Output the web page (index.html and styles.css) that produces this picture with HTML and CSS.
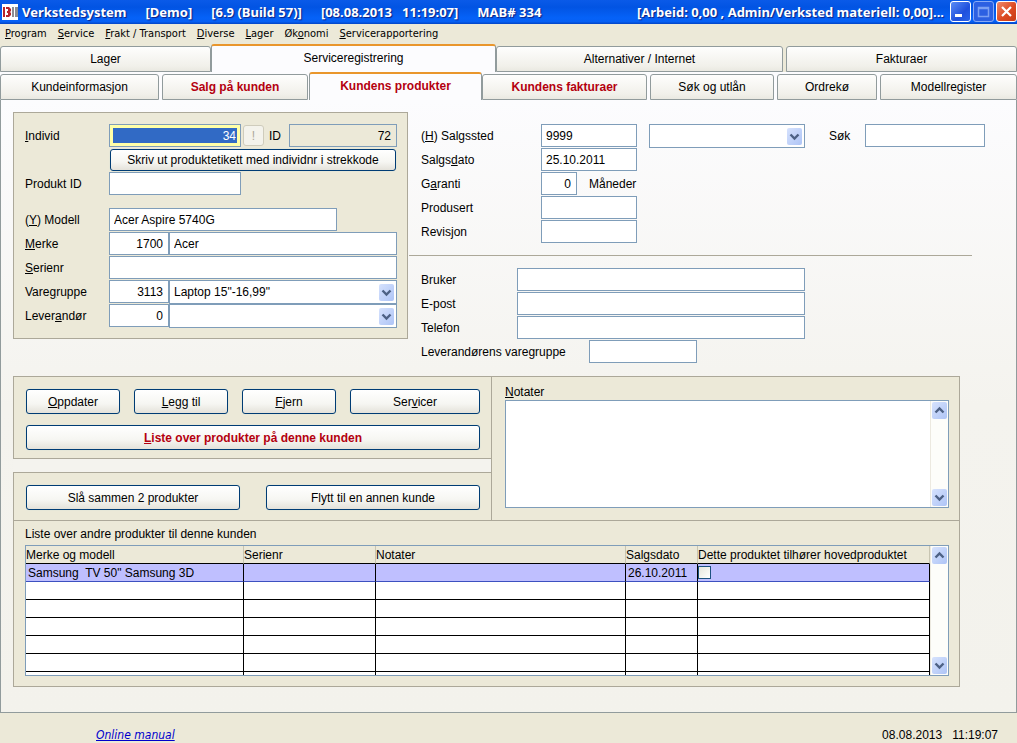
FILE: index.html
```html
<!DOCTYPE html>
<html lang="no">
<head>
<meta charset="utf-8">
<title>Verkstedsystem</title>
<link rel="stylesheet" href="styles.css">
</head>
<body>
<svg class="defs" width="0" height="0" aria-hidden="true">
  <symbol id="down" viewBox="0 0 15 17"><rect x="0" y="0" width="15" height="17" rx="2" fill="url(#blue)"/><path d="M3.5 6.5 7.5 10.5 11.5 6.5" fill="none" stroke="#4d6185" stroke-width="2.4"/></symbol>
  <symbol id="up" viewBox="0 0 15 17"><rect x="0" y="0" width="15" height="17" rx="2" fill="url(#blue)"/><path d="M3.5 10.5 7.5 6.5 11.5 10.5" fill="none" stroke="#4d6185" stroke-width="2.4"/></symbol>
  <linearGradient id="blue" x1="0" y1="0" x2="1" y2="1"><stop offset="0" stop-color="#d6e2fd"/><stop offset="1" stop-color="#aec4f6"/></linearGradient>
</svg>
<div class="window">
  <header class="titlebar">
    <svg class="logo" viewBox="0 0 16 16" width="16" height="16" aria-hidden="true">
      <rect width="16" height="16" fill="#fff"/>
      <path d="M1 3h2v10H1zM4 3h3l2 2v2L8 8l1 1v2l-2 2H4v-2h2v-2H5V7h1V5H4z" fill="#b8232b"/>
      <path d="M10 3h2v10h-2zM13 3h3v10h-3z" fill="#8d8d92"/>
    </svg>
    <div class="captions">
      <span>Verkstedsystem</span><span>[Demo]</span><span>[6.9 (Build 57)]</span><span>[08.08.2013&nbsp;&nbsp; 11:19:07]</span><span>MAB# 334</span>
      <span class="totals">[Arbeid: 0,00 , Admin/Verksted materiell: 0,00]...</span>
    </div>
    <div class="controls">
      <button class="ctl" aria-label="Minimer"><svg viewBox="0 0 19 19" width="19" height="19"><path d="M4 12h7v3H4z" fill="#fff"/></svg></button>
      <button class="ctl dim" aria-label="Maksimer" disabled><svg viewBox="0 0 19 19" width="19" height="19"><path d="M4.500 5.500h10v9h-10zM4 6.500h11" fill="none" stroke="#7ba0f3" stroke-width="1.500"/></svg></button>
      <button class="ctl close" aria-label="Lukk"><svg viewBox="0 0 19 19" width="19" height="19"><path d="M5 5l9 9M14 5l-9 9" stroke="#fff" stroke-width="2.200"/></svg></button>
    </div>
  </header>
  <nav class="menubar">
    <button><u>P</u>rogram</button><button><u>S</u>ervice</button><button><u>F</u>rakt / Transport</button><button><u>D</u>iverse</button><button><u>L</u>ager</button><button>Øk<u>o</u>nomi</button><button><u>S</u>ervicerapportering</button>
  </nav>
  <nav class="tabs main-tabs">
    <button class="tab">Lager</button><button class="tab active">Serviceregistrering</button><button class="tab">Alternativer / Internet</button><button class="tab">Fakturaer</button>
  </nav>
  <nav class="tabs sub-tabs">
    <button class="tab">Kundeinformasjon</button><button class="tab red">Salg på kunden</button><button class="tab red active">Kundens produkter</button><button class="tab red">Kundens fakturaer</button><button class="tab">Søk og utlån</button><button class="tab">Ordrekø</button><button class="tab">Modellregister</button>
  </nav>
  <main class="page">
    <div class="forms">
      <section class="box product">
        <div class="row">
          <label for="individ"><u>I</u>ndivid</label>
          <span class="focus w132"><input id="individ" class="num" value="34"></span>
          <button class="bang" disabled>!</button>
          <label class="id" for="pid">ID</label>
          <input id="pid" class="field num grow readonly" value="72" readonly>
        </div>
        <div class="row">
          <span class="label"></span>
          <button class="btn grow">Skriv ut produktetikett med individnr i strekkode</button>
        </div>
        <div class="row spaced"><label for="prod">Produkt ID</label><input id="prod" class="field w132"></div>
        <div class="row"><label for="modell">(<u>Y</u>) Modell</label><input id="modell" class="field w228" value="Acer Aspire 5740G"></div>
        <div class="row"><label for="merke"><u>M</u>erke</label><input id="merke" class="field num w60" value="1700"><input class="field grow" aria-label="Merkenavn" value="Acer"></div>
        <div class="row"><label for="serie"><u>S</u>erienr</label><input id="serie" class="field grow"></div>
        <div class="row"><label for="vare">Vare<u>g</u>ruppe</label><input id="vare" class="field num w60" value="3113"><span class="combo grow"><select aria-label="Varegruppe navn"><option>Laptop 15"-16,99"</option></select><svg><use href="#down"/></svg></span></div>
        <div class="row"><label for="lev">Lever<u>a</u>ndør</label><input id="lev" class="field num w60" value="0"><span class="combo grow"><select aria-label="Leverandør navn"><option></option></select><svg><use href="#down"/></svg></span></div>
      </section>
      <section class="details">
        <div class="sale">
          <div class="row">
            <label for="sted">(<u>H</u>) Salgssted</label><input id="sted" class="field w96" value="9999">
            <span class="combo place"><select aria-label="Salgssted navn"><option></option></select><svg><use href="#down"/></svg></span>
            <label class="find" for="sok">Søk</label><input id="sok" class="field w120">
          </div>
          <div class="row"><label for="dato">Salgs<u>d</u>ato</label><input id="dato" class="field w96" value="25.10.2011"></div>
          <div class="row"><label for="garanti">G<u>a</u>ranti</label><input id="garanti" class="field num w36" value="0"><span class="unit">Måneder</span></div>
          <div class="row"><label for="produsert">Produsert</label><input id="produsert" class="field w96"></div>
          <div class="row"><label for="revisjon">Revisjon</label><input id="revisjon" class="field w96"></div>
        </div>
        <hr>
        <div class="user">
          <div class="row"><label for="bruker">Bruker</label><input id="bruker" class="field w288"></div>
          <div class="row"><label for="epost">E-post</label><input id="epost" class="field w288"></div>
          <div class="row"><label for="tlf">Telefon</label><input id="tlf" class="field w288"></div>
          <div class="row"><label class="long" for="levgr">Leverandørens varegruppe</label><input id="levgr" class="field w108"></div>
        </div>
      </section>
    </div>
    <div class="lower">
      <div class="actions">
        <div class="group">
          <div class="buttons"><button class="btn w94"><u>O</u>ppdater</button><button class="btn w94"><u>L</u>egg til</button><button class="btn w94"><u>F</u>jern</button><button class="btn grow">Ser<u>v</u>icer</button></div>
          <div class="buttons"><button class="btn grow red"><u>L</u>iste over produkter på denne kunden</button></div>
        </div>
        <div class="gap"></div>
        <div class="group"><div class="buttons wide"><button class="btn grow">Slå sammen 2 produkter</button><button class="btn grow">Flytt til en annen kunde</button></div></div>
      </div>
      <div class="notes">
        <label for="notater"><u>N</u>otater</label>
        <div class="frame memo"><textarea id="notater"></textarea><div class="scroll"><svg><use href="#up"/></svg><svg><use href="#down"/></svg></div></div>
      </div>
      <div class="others">
        <div class="heading">Liste over andre produkter til denne kunden</div>
        <div class="frame">
          <table>
            <colgroup><col class="c1"><col class="c2"><col class="c3"><col class="c4"><col class="c5"></colgroup>
            <thead><tr><th>Merke og modell</th><th>Serienr</th><th>Notater</th><th>Salgsdato</th><th>Dette produktet tilhører hovedproduktet</th></tr></thead>
            <tbody>
              <tr class="selected"><td>Samsung&nbsp; TV 50" Samsung 3D</td><td></td><td></td><td>26.10.2011</td><td class="check"><input type="checkbox" aria-label="Tilhører hovedproduktet"></td></tr>
              <tr><td></td><td></td><td></td><td></td><td></td></tr>
              <tr><td></td><td></td><td></td><td></td><td></td></tr>
              <tr><td></td><td></td><td></td><td></td><td></td></tr>
              <tr><td></td><td></td><td></td><td></td><td></td></tr>
              <tr><td></td><td></td><td></td><td></td><td></td></tr>
              <tr class="cut"><td></td><td></td><td></td><td></td><td></td></tr>
            </tbody>
          </table>
          <div class="scroll"><svg><use href="#up"/></svg><svg><use href="#down"/></svg></div>
        </div>
      </div>
    </div>
  </main>
  <footer class="status"><a href="#">Online manual</a><span>08.08.2013&nbsp;&nbsp; 11:19:07</span></footer>
</div>
</body>
</html>
```
FILE: styles.css
```css
* { box-sizing: border-box; }
body { margin: 0; background: #ece9d8; color: #000; font: 12px/16px "Liberation Sans", Arial, sans-serif; }
button, input, select, textarea { font: inherit; color: inherit; margin: 0; }
button { padding: 0; border: 0; background: none; white-space: nowrap; }
svg { display: block; }
.defs { position: absolute; }
.window { display: flex; flex-direction: column; min-height: 100vh; }

.titlebar { display: flex; align-items: center; height: 24px; padding: 0 0 1px 2px; gap: 4px; background: linear-gradient(#0a5ae8, #0254e3 30%, #0562f8 75%, #0660f4 90%, #0344c4); color: #fff; font: bold 13px/20px "Noto Sans", sans-serif; text-shadow: 1px 1px 1px #0f1f80; }
.captions { display: flex; flex: 1; gap: 19px; white-space: nowrap; }
.totals { margin-left: auto; }
.controls { display: flex; gap: 2px; padding-left: 2px; }
.ctl { width: 21px; height: 21px; border: 1px solid #fff; border-radius: 3px; background: linear-gradient(135deg, #5a8cf5, #1f50dd 60%, #2a64ea); }
.ctl.dim { border-color: #86a9f5; background: #2c60e2; }
.ctl.close { background: linear-gradient(135deg, #ee8a6c, #dd4a22 55%, #c83c16); }

.menubar { display: flex; gap: 11px; height: 20px; padding: 0 5px; font: 11px/18px "DejaVu Sans Condensed", sans-serif; }

.tabs { display: grid; align-items: end; height: 28px; background: #ece9d8; }
.main-tabs { grid-template-columns: 211fr 285fr 290fr 231fr; }
.sub-tabs { grid-template-columns: 162fr 147fr 173fr 168fr 127fr 103fr 137fr; background: #fcfcfe; }
.tab { height: 26px; margin-right: 3px; border: 1px solid #919b9c; border-radius: 3px 3px 0 0; background: linear-gradient(#fefefd, #f1f0ea 80%, #eae9e1); }
.main-tabs .tab:first-child, .tab:last-child { margin-right: 0; }
.sub-tabs .tab:nth-child(2) { margin-right: 1px; }
.tab.active { height: 28px; margin-right: 0; padding-bottom: 2px; border-top: 2px solid #e9962c; border-bottom: 0; background: #fcfcfe; }
.red { color: #b4000f; font-weight: bold; }

.page { flex: 1; padding: 12px; border: solid #919b9c; border-width: 0 1px 1px; background: linear-gradient(#fcfcfe, #f4f3ee 50%, #f3f2ec); }
.forms { display: flex; align-items: flex-start; gap: 1px; margin-bottom: 12px; }
.box { border: 1px solid #aca899; background: #ece9d8; }
.product { width: 395px; padding: 11px 10px 10px 11px; }
.row { display: flex; height: 24px; align-items: flex-start; }
.row.spaced { height: 36px; }
.row label, .row .label { width: 84px; line-height: 24px; }
.field, .combo, .focus { height: 23px; border: 1px solid #7f9db9; background: #fff; border-radius: 0; outline: 0; }
.field { padding: 0 4px; }
.num { text-align: right; padding-right: 5px; }
.grow { flex: 1; min-width: 0; }
.w36 { width: 36px; } .w60 { width: 60px; } .w94 { width: 94px; } .w96 { width: 96px; } .w108 { width: 108px; }
.w120 { width: 120px; } .w132 { width: 132px; } .w228 { width: 228px; } .w288 { width: 288px; }
.focus { padding: 3px; background: #ffffa8; }
.focus input { display: block; width: 100%; height: 15px; padding: 0 1px 0 0; border: 0; background: #316ac5; color: #fff; outline: 0; }
.readonly { background: #ece9d8; }
.bang { width: 21px; height: 21px; margin: 1px 5px 0 2px; border: 1px solid #cfccbc; border-radius: 3px; background: #f4f3ec; color: #aca899; }
.row .id { width: 20px; }
.combo { position: relative; height: 24px; }
.combo select { width: 100%; height: 100%; padding: 0 4px; border: 0; background: none; appearance: none; outline: 0; }
.combo svg { position: absolute; top: 3px; right: 2px; width: 15px; height: 17px; pointer-events: none; }

.btn { height: 25px; border: 1px solid #003c74; border-radius: 3px; background: linear-gradient(#fff, #f6f6f2 60%, #e4e2da); box-shadow: 0 0 1px #b9d3e0; }
.product .btn { height: 22px; margin: 1px 1px 0; }

.details { flex: 1; }
.details .row { padding-left: 12px; }
.sale { padding: 12px 0 11px; }
.sale .row label { width: 120px; }
.user { padding-top: 12px; }
.user .row label { width: 96px; }
.user .row .long { width: 168px; }
.place { width: 156px; margin-left: 12px; }
.sale .row .find { width: 36px; margin-left: 24px; }
.unit { margin-left: 12px; line-height: 24px; }
hr { width: calc(100% - 32px); margin: 0; border: 0; border-top: 1px solid #aca899; }

.lower { display: grid; grid-template-columns: 478px 1fr; width: 947px; border: 1px solid #aca899; background: #ece9d8; max-width: 100%; }
.actions { border-right: 1px solid #aca899; }
.group { padding: 12px 11px 8px 12px; }
.buttons { display: flex; gap: 14px; }
.buttons + .buttons { margin-top: 11px; }
.buttons.wide { gap: 26px; }
.gap { height: 15px; border: solid #aca899; border-width: 1px 0; background: #f4f3ee; margin-left: -1px; }
.notes { display: flex; flex-direction: column; padding: 7px 10px 12px 13px; }
.frame { display: flex; border: 1px solid #7f9db9; background: #fff; }
.memo { height: 108px; }
.memo textarea { flex: 1; border: 0; resize: none; outline: 0; background: none; }
.scroll { display: flex; flex-direction: column; justify-content: space-between; width: 18px; padding: 1px; background: #fdfdfa; border-left: 1px solid #ece9e0; }
.scroll svg { width: 15px; height: 17px; }
.others { grid-column: 1 / -1; padding: 5px 10px 10px 11px; border-top: 1px solid #aca899; }
.heading { margin-bottom: 3px; }
table { flex: 1; table-layout: fixed; border-spacing: 0; }
.c1 { width: 218px; } .c2 { width: 132px; } .c3 { width: 250px; } .c4 { width: 72px; }
th, td { height: 18px; padding: 0 2px; border: solid #000; border-width: 0 1px 1px 0; line-height: 16px; white-space: nowrap; overflow: hidden; text-align: left; font-weight: normal; }
th { padding: 0; border-right-color: #c8c5b2; background: #ece9d8; }
.selected td { background: #bfbfff; border-bottom-color: #3c50c0; }
.cut td { height: 3px; border-bottom: 0; line-height: 0; }
.selected .check { padding: 0; }
.check input { display: block; width: 13px; height: 13px; border: 1px solid #1c5180; background: linear-gradient(135deg, #e6e5dc, #fff); appearance: none; }

.status { display: flex; justify-content: space-between; align-items: flex-end; height: 30px; padding: 0 19px 0 96px; }
.status a { color: #0000cc; font: italic 12px/16px "DejaVu Sans Condensed", sans-serif; }
```
